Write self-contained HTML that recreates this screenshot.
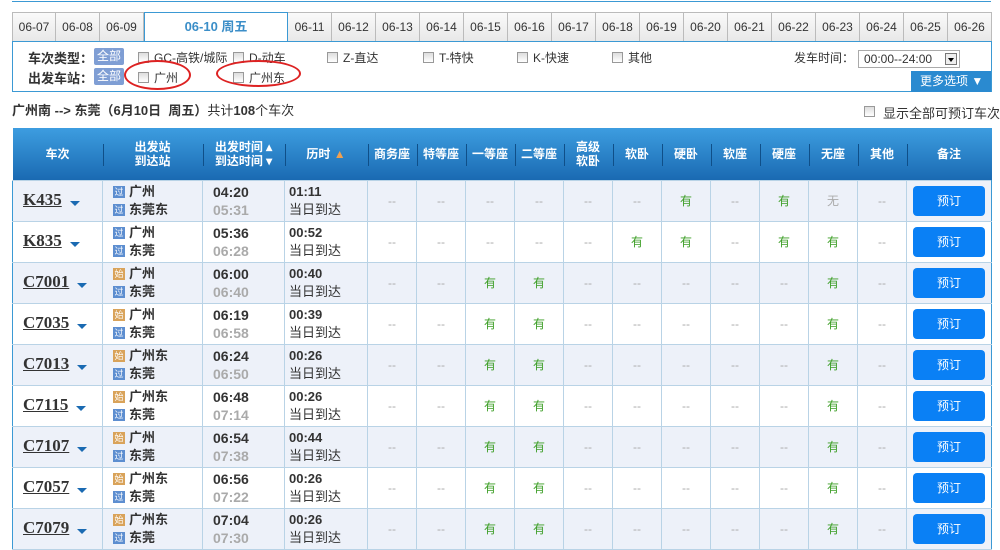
<!DOCTYPE html>
<html><head><meta charset="utf-8"><style>
*{margin:0;padding:0;box-sizing:border-box}
body{width:1000px;height:537px;overflow:hidden;background:#fff;font-family:"Liberation Sans","Noto Sans CJK SC",sans-serif;font-size:12px;color:#333;position:relative}
.topline{position:absolute;left:12px;top:0;width:979px;height:2px;border-bottom:1px solid #3b99d4}
.tabs{position:absolute;left:12px;top:12px;height:30px;display:flex}
.tab{width:44px;height:30px;border:1px solid #bbb;border-left:none;background:linear-gradient(#fafafa,#e8e8e8);text-align:center;line-height:28px;font-size:12px;color:#333}
.tab:first-child{border-left:1px solid #bbb}
.tab.act{width:144px;background:#fff;border:1px solid #3b99d4;border-bottom:none;color:#3b8ec8;font-weight:bold;font-size:13px;height:30px}
.filter{position:absolute;left:12px;top:41px;width:980px;height:51px;border:1px solid #3b99d4}
.filter .lab{position:absolute;font-weight:bold;font-size:13px}
.all{position:absolute;background:#7f9ed4;color:#fff;font-size:12px;padding:0 3px;height:17px;line-height:17px;border-radius:2px}
.cb{position:absolute;width:11px;height:11px;border:1px solid #999;background:linear-gradient(#ddd,#fff)}
.ft{position:absolute;font-size:12px}
.oval{position:absolute;border:2px solid #d22;border-radius:50%}
.sel{position:absolute;left:858px;top:50px;width:102px;height:18px;border:1px solid #aaa;font-size:12px;line-height:16px;padding-left:5px}
.sel i{position:absolute;right:2px;top:2px;width:12px;height:12px;border:1px solid #777;background:#eee}
.sel i:after{content:"";position:absolute;left:2px;top:4px;border:3px solid transparent;border-top:4px solid #000}
.more{position:absolute;left:911px;top:71px;width:80px;height:21px;background:#2a8ad0;color:#fff;font-size:12px;line-height:21px;padding-left:9px}
.sum{position:absolute;left:12px;top:100px;font-size:13px}
.sum b{font-weight:bold}
.showall{position:absolute;left:864px;top:104px;font-size:12px}
table{position:absolute;left:12px;top:128px;width:979px;border-collapse:collapse;table-layout:fixed}
th{height:52px;background:linear-gradient(#3d9de0,#1a6ab2);color:#fff;font-size:12px;font-weight:bold;line-height:14px;position:relative}
th+th:before{content:"";position:absolute;left:0;top:16px;height:22px;border-left:1px solid #0f4f88}
td{height:41px;border:1px solid #b9d3e6;text-align:center;color:#aaa;font-size:12px}
tr.o td{background:#edf1f9}
td.tn{border-left:1px solid #3b99d4;text-align:left;padding-left:10px}
td.tn b{font-size:17px;font-family:"Liberation Serif",serif;color:#333;text-decoration:underline}
td.tn i{display:inline-block;margin-left:8px;border:5px solid transparent;border-top:5px solid #1a6ab2;vertical-align:-6px}
td.st,td.tm,td.dr{text-align:left;color:#333;line-height:18px}
td.st{padding-left:10px;font-weight:bold;font-size:13px}
.bd{display:inline-block;width:12px;height:12px;font-size:9px;line-height:12px;color:#fff;text-align:center;vertical-align:1px;margin-right:4px;font-weight:normal}
.g{background:#5d8ed0}.s{background:#d9a35a}
td.tm{padding-left:10px;font-weight:bold;font-size:14px}
td.tm span{color:#aaa}
td.dr{padding-left:4px;font-size:13px}
td.dr b{font-weight:bold}
.y{color:#3a9d23}
td.bk{border-right:1px solid #3b99d4}
.btn{display:inline-block;width:72px;height:30px;background:#0a80f5;color:#fff;border-radius:4px;line-height:30px;font-size:12px}
</style></head><body>
<div class="topline"></div>
<div class="tabs"><div class="tab">06-07</div><div class="tab">06-08</div><div class="tab">06-09</div><div class="tab act">06-10 周五</div><div class="tab">06-11</div><div class="tab">06-12</div><div class="tab">06-13</div><div class="tab">06-14</div><div class="tab">06-15</div><div class="tab">06-16</div><div class="tab">06-17</div><div class="tab">06-18</div><div class="tab">06-19</div><div class="tab">06-20</div><div class="tab">06-21</div><div class="tab">06-22</div><div class="tab">06-23</div><div class="tab">06-24</div><div class="tab">06-25</div><div class="tab">06-26</div></div>
<div class="filter">
<span class="lab" style="left:15px;top:6px">车次类型：</span><span class="all" style="left:81px;top:6px">全部</span>
<span class="cb" style="left:125px;top:10px"></span><span class="ft" style="left:141px;top:7px">GC-高铁/城际</span>
<span class="cb" style="left:220px;top:10px"></span><span class="ft" style="left:236px;top:7px">D-动车</span>
<span class="cb" style="left:314px;top:10px"></span><span class="ft" style="left:330px;top:7px">Z-直达</span>
<span class="cb" style="left:410px;top:10px"></span><span class="ft" style="left:426px;top:7px">T-特快</span>
<span class="cb" style="left:504px;top:10px"></span><span class="ft" style="left:520px;top:7px">K-快速</span>
<span class="cb" style="left:599px;top:10px"></span><span class="ft" style="left:615px;top:7px">其他</span>
<span class="ft" style="left:781px;top:7px">发车时间：</span>
<span class="lab" style="left:15px;top:26px">出发车站：</span><span class="all" style="left:81px;top:26px">全部</span>
<span class="cb" style="left:125px;top:30px"></span><span class="ft" style="left:141px;top:27px">广州</span>
<span class="cb" style="left:220px;top:30px"></span><span class="ft" style="left:236px;top:27px">广州东</span>
</div>
<div class="oval" style="left:124px;top:60px;width:67px;height:30px"></div>
<div class="oval" style="left:216px;top:60px;width:85px;height:27px"></div>
<div class="sel">00:00--24:00<i></i></div>
<div class="more">更多选项 ▼</div>
<div class="sum"><b>广州南 --&gt; 东莞（6月10日 &nbsp;周五）</b>共计<b>108</b>个车次</div>
<span class="cb" style="left:864px;top:106px"></span><span class="showall" style="left:883px;top:103px;font-size:13px">显示全部可预订车次</span>
<table>
<colgroup><col style="width:90px"><col style="width:100px"><col style="width:82px"><col style="width:83px"><col span="11" style="width:49px"><col style="width:85px"></colgroup>
<tr><th>车次</th><th>出发站<br>到达站</th><th>出发时间 ▴<br>到达时间 ▾</th><th>历时 <span style="color:#f0a050">▲</span></th><th>商务座</th><th>特等座</th><th>一等座</th><th>二等座</th><th>高级<br>软卧</th><th>软卧</th><th>硬卧</th><th>软座</th><th>硬座</th><th>无座</th><th>其他</th><th>备注</th></tr>
<tr class="o"><td class="tn"><b>K435</b><i></i></td><td class="st"><span class="bd g">过</span>广州<br><span class="bd g">过</span>东莞东</td><td class="tm">04:20<br><span>05:31</span></td><td class="dr"><b>01:11</b><br>当日到达</td><td>--</td><td>--</td><td>--</td><td>--</td><td>--</td><td>--</td><td class="y">有</td><td>--</td><td class="y">有</td><td>无</td><td>--</td><td class="bk"><span class="btn">预订</span></td></tr>
<tr><td class="tn"><b>K835</b><i></i></td><td class="st"><span class="bd g">过</span>广州<br><span class="bd g">过</span>东莞</td><td class="tm">05:36<br><span>06:28</span></td><td class="dr"><b>00:52</b><br>当日到达</td><td>--</td><td>--</td><td>--</td><td>--</td><td>--</td><td class="y">有</td><td class="y">有</td><td>--</td><td class="y">有</td><td class="y">有</td><td>--</td><td class="bk"><span class="btn">预订</span></td></tr>
<tr class="o"><td class="tn"><b>C7001</b><i></i></td><td class="st"><span class="bd s">始</span>广州<br><span class="bd g">过</span>东莞</td><td class="tm">06:00<br><span>06:40</span></td><td class="dr"><b>00:40</b><br>当日到达</td><td>--</td><td>--</td><td class="y">有</td><td class="y">有</td><td>--</td><td>--</td><td>--</td><td>--</td><td>--</td><td class="y">有</td><td>--</td><td class="bk"><span class="btn">预订</span></td></tr>
<tr><td class="tn"><b>C7035</b><i></i></td><td class="st"><span class="bd s">始</span>广州<br><span class="bd g">过</span>东莞</td><td class="tm">06:19<br><span>06:58</span></td><td class="dr"><b>00:39</b><br>当日到达</td><td>--</td><td>--</td><td class="y">有</td><td class="y">有</td><td>--</td><td>--</td><td>--</td><td>--</td><td>--</td><td class="y">有</td><td>--</td><td class="bk"><span class="btn">预订</span></td></tr>
<tr class="o"><td class="tn"><b>C7013</b><i></i></td><td class="st"><span class="bd s">始</span>广州东<br><span class="bd g">过</span>东莞</td><td class="tm">06:24<br><span>06:50</span></td><td class="dr"><b>00:26</b><br>当日到达</td><td>--</td><td>--</td><td class="y">有</td><td class="y">有</td><td>--</td><td>--</td><td>--</td><td>--</td><td>--</td><td class="y">有</td><td>--</td><td class="bk"><span class="btn">预订</span></td></tr>
<tr><td class="tn"><b>C7115</b><i></i></td><td class="st"><span class="bd s">始</span>广州东<br><span class="bd g">过</span>东莞</td><td class="tm">06:48<br><span>07:14</span></td><td class="dr"><b>00:26</b><br>当日到达</td><td>--</td><td>--</td><td class="y">有</td><td class="y">有</td><td>--</td><td>--</td><td>--</td><td>--</td><td>--</td><td class="y">有</td><td>--</td><td class="bk"><span class="btn">预订</span></td></tr>
<tr class="o"><td class="tn"><b>C7107</b><i></i></td><td class="st"><span class="bd s">始</span>广州<br><span class="bd g">过</span>东莞</td><td class="tm">06:54<br><span>07:38</span></td><td class="dr"><b>00:44</b><br>当日到达</td><td>--</td><td>--</td><td class="y">有</td><td class="y">有</td><td>--</td><td>--</td><td>--</td><td>--</td><td>--</td><td class="y">有</td><td>--</td><td class="bk"><span class="btn">预订</span></td></tr>
<tr><td class="tn"><b>C7057</b><i></i></td><td class="st"><span class="bd s">始</span>广州东<br><span class="bd g">过</span>东莞</td><td class="tm">06:56<br><span>07:22</span></td><td class="dr"><b>00:26</b><br>当日到达</td><td>--</td><td>--</td><td class="y">有</td><td class="y">有</td><td>--</td><td>--</td><td>--</td><td>--</td><td>--</td><td class="y">有</td><td>--</td><td class="bk"><span class="btn">预订</span></td></tr>
<tr class="o"><td class="tn"><b>C7079</b><i></i></td><td class="st"><span class="bd s">始</span>广州东<br><span class="bd g">过</span>东莞</td><td class="tm">07:04<br><span>07:30</span></td><td class="dr"><b>00:26</b><br>当日到达</td><td>--</td><td>--</td><td class="y">有</td><td class="y">有</td><td>--</td><td>--</td><td>--</td><td>--</td><td>--</td><td class="y">有</td><td>--</td><td class="bk"><span class="btn">预订</span></td></tr>
</table>
</body></html>
